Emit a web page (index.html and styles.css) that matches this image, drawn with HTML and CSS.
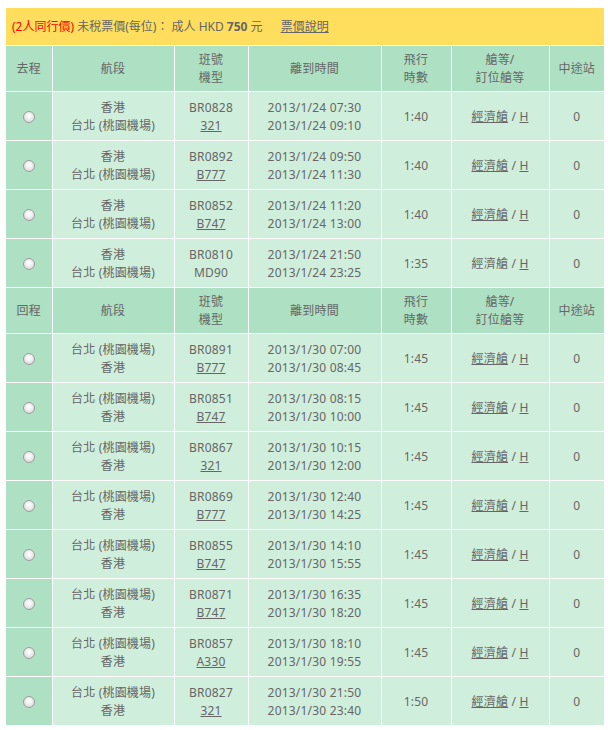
FILE: index.html
```html
<!DOCTYPE html>
<html lang="zh-Hant">
<head>
<meta charset="utf-8">
<title>票價</title>
<link rel="stylesheet" href="styles.css">
</head>
<body>
<div class="wrap">
  <div class="price-bar">
    <span class="red">(2人同行價)</span> 未稅票價(每位)： 成人 HKD <b>750</b> 元
    <a class="link info" href="#">票價說明</a>
  </div>
  <table class="flights">
    <colgroup>
      <col class="c1"><col class="c2"><col class="c3"><col class="c4"><col class="c5"><col class="c6"><col class="c7">
    </colgroup>
    <tbody>
      <tr class="head">
        <th>去程</th><th>航段</th><th>班號<br>機型</th><th>離到時間</th><th>飛行<br>時數</th><th>艙等/<br>訂位艙等</th><th>中途站</th>
      </tr>
      <tr><td class="sel"><input type="radio" name="go"></td><td>香港<br>台北 (桃園機場)</td><td>BR0828<br><a class="link" href="#">321</a></td><td>2013/1/24 07:30<br>2013/1/24 09:10</td><td>1:40</td><td><a class="link" href="#">經濟艙</a> / <a class="link" href="#">H</a></td><td>0</td></tr>
      <tr><td class="sel"><input type="radio" name="go"></td><td>香港<br>台北 (桃園機場)</td><td>BR0892<br><a class="link" href="#">B777</a></td><td>2013/1/24 09:50<br>2013/1/24 11:30</td><td>1:40</td><td><a class="link" href="#">經濟艙</a> / <a class="link" href="#">H</a></td><td>0</td></tr>
      <tr><td class="sel"><input type="radio" name="go"></td><td>香港<br>台北 (桃園機場)</td><td>BR0852<br><a class="link" href="#">B747</a></td><td>2013/1/24 11:20<br>2013/1/24 13:00</td><td>1:40</td><td><a class="link" href="#">經濟艙</a> / <a class="link" href="#">H</a></td><td>0</td></tr>
      <tr><td class="sel"><input type="radio" name="go"></td><td>香港<br>台北 (桃園機場)</td><td>BR0810<br>MD90</td><td>2013/1/24 21:50<br>2013/1/24 23:25</td><td>1:35</td><td>經濟艙 / <a class="link" href="#">H</a></td><td>0</td></tr>
      <tr class="head">
        <th>回程</th><th>航段</th><th>班號<br>機型</th><th>離到時間</th><th>飛行<br>時數</th><th>艙等/<br>訂位艙等</th><th>中途站</th>
      </tr>
      <tr><td class="sel"><input type="radio" name="back"></td><td>台北 (桃園機場)<br>香港</td><td>BR0891<br><a class="link" href="#">B777</a></td><td>2013/1/30 07:00<br>2013/1/30 08:45</td><td>1:45</td><td><a class="link" href="#">經濟艙</a> / <a class="link" href="#">H</a></td><td>0</td></tr>
      <tr><td class="sel"><input type="radio" name="back"></td><td>台北 (桃園機場)<br>香港</td><td>BR0851<br><a class="link" href="#">B747</a></td><td>2013/1/30 08:15<br>2013/1/30 10:00</td><td>1:45</td><td><a class="link" href="#">經濟艙</a> / <a class="link" href="#">H</a></td><td>0</td></tr>
      <tr><td class="sel"><input type="radio" name="back"></td><td>台北 (桃園機場)<br>香港</td><td>BR0867<br><a class="link" href="#">321</a></td><td>2013/1/30 10:15<br>2013/1/30 12:00</td><td>1:45</td><td><a class="link" href="#">經濟艙</a> / <a class="link" href="#">H</a></td><td>0</td></tr>
      <tr><td class="sel"><input type="radio" name="back"></td><td>台北 (桃園機場)<br>香港</td><td>BR0869<br><a class="link" href="#">B777</a></td><td>2013/1/30 12:40<br>2013/1/30 14:25</td><td>1:45</td><td><a class="link" href="#">經濟艙</a> / <a class="link" href="#">H</a></td><td>0</td></tr>
      <tr><td class="sel"><input type="radio" name="back"></td><td>台北 (桃園機場)<br>香港</td><td>BR0855<br><a class="link" href="#">B747</a></td><td>2013/1/30 14:10<br>2013/1/30 15:55</td><td>1:45</td><td><a class="link" href="#">經濟艙</a> / <a class="link" href="#">H</a></td><td>0</td></tr>
      <tr><td class="sel"><input type="radio" name="back"></td><td>台北 (桃園機場)<br>香港</td><td>BR0871<br><a class="link" href="#">B747</a></td><td>2013/1/30 16:35<br>2013/1/30 18:20</td><td>1:45</td><td><a class="link" href="#">經濟艙</a> / <a class="link" href="#">H</a></td><td>0</td></tr>
      <tr><td class="sel"><input type="radio" name="back"></td><td>台北 (桃園機場)<br>香港</td><td>BR0857<br><a class="link" href="#">A330</a></td><td>2013/1/30 18:10<br>2013/1/30 19:55</td><td>1:45</td><td><a class="link" href="#">經濟艙</a> / <a class="link" href="#">H</a></td><td>0</td></tr>
      <tr><td class="sel"><input type="radio" name="back"></td><td>台北 (桃園機場)<br>香港</td><td>BR0827<br><a class="link" href="#">321</a></td><td>2013/1/30 21:50<br>2013/1/30 23:40</td><td>1:50</td><td><a class="link" href="#">經濟艙</a> / <a class="link" href="#">H</a></td><td>0</td></tr>
    </tbody>
  </table>
</div>
</body>
</html>
```
FILE: styles.css
```css
html, body {
  margin: 0;
  padding: 0;
  background: #fff;
}
body {
  padding: 8px 4px 0 6px;
  font-family: "Noto Sans", "Noto Sans CJK TC", sans-serif;
  font-size: 12px;
  letter-spacing: 0.2px;
  color: #666;
}
.wrap {
  width: 598px;
}
.price-bar {
  background: #fede5c;
  height: 37px;
  line-height: 37px;
  padding-left: 6px;
  border-bottom: 1px solid #fff;
  box-sizing: content-box;
  white-space: nowrap;
  letter-spacing: 0;
}
.price-bar b {
  font-weight: bold;
}
.red {
  color: #f00;
}
.link {
  color: #666;
  text-decoration: underline;
}
.info {
  margin-left: 15px;
}
.flights {
  width: 598px;
  border-collapse: collapse;
  table-layout: fixed;
}
.c1 { width: 46px; }
.c2 { width: 122px; }
.c3 { width: 74px; }
.c4 { width: 133px; }
.c5 { width: 70px; }
.c6 { width: 98px; }
.c7 { width: 55px; }
.flights th,
.flights td {
  border: 1px solid #fff;
  text-align: center;
  vertical-align: middle;
  line-height: 18px;
  font-weight: normal;
  padding: 0;
}
.flights tr:first-child th {
  border-top: 0;
}
.flights th:first-child,
.flights td:first-child {
  border-left: 0;
}
.flights th:last-child,
.flights td:last-child {
  border-right: 0;
}
.flights th {
  background: #aee0c3;
  height: 45px;
}
.flights td {
  background: #d0eedc;
  height: 47px;
  padding-top: 1px;
}
.flights td.sel {
  background: #aee0c3;
}
.sel input {
  appearance: none;
  -webkit-appearance: none;
  width: 12px;
  height: 12px;
  margin: 0;
  border-radius: 50%;
  border: 1px solid #9c9c9c;
  background: radial-gradient(circle at 50% 40%, #ffffff 0%, #f2f2f2 35%, #cfcfcf 100%);
  vertical-align: middle;
}
```
